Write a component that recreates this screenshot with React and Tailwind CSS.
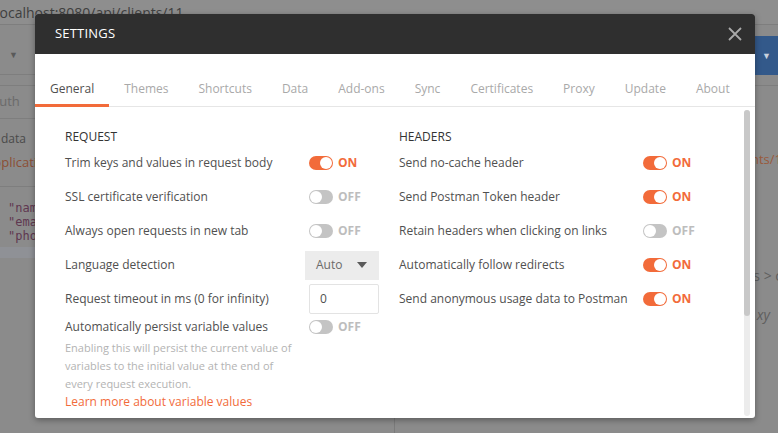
import React from "react";

const tabs = [
  "General",
  "Themes",
  "Shortcuts",
  "Data",
  "Add-ons",
  "Sync",
  "Certificates",
  "Proxy",
  "Update",
  "About",
];

const Toggle = ({ on }) => (
  <div className="flex items-center gap-[5px] pl-1">
    {on ? (
      <div className="w-[24px] h-[14px] rounded-full bg-[#f26b3a] flex items-center justify-end pr-[1px]">
        <div className="w-[12px] h-[12px] rounded-full bg-white" />
      </div>
    ) : (
      <div className="w-[24px] h-[14px] rounded-full bg-[#c4c4c4] flex items-center pl-[1px]">
        <div className="w-[12px] h-[12px] rounded-full bg-white" />
      </div>
    )}
    <span
      className={
        on
          ? "text-[12px] font-bold text-[#f26b3a]"
          : "text-[12px] font-bold text-[#bdbdbd]"
      }>
      {on ? "ON" : "OFF"}
    </span>
  </div>
);

const Row = ({ label, children }) => (
  <div className="flex items-center h-[34px]">
    <div className="w-[240px] text-[12px] text-[#505050]">{label}</div>
    <div className="w-[74px]">{children}</div>
  </div>
);

const App = () => {
  return (
    <div className="relative w-[778px] h-[433px] overflow-hidden bg-[#8b8b8b] font-['Open_Sans',sans-serif]">
      {/* dimmed app behind */}
      <div className="h-[25px] border-b border-[#7e7e7e] bg-[#8e8e8e] flex items-center">
        <span className="ml-[-4px] text-[14px] text-[#3f3f3f]">
          localhost:8080/api/clients/11
        </span>
      </div>
      <div className="flex h-[408px]">
        <div className="w-[395px] border-r border-[#7b7b7b]">
          <div className="w-[35px] overflow-hidden flex flex-col">
            <div className="h-[11px]" />
            <div className="h-[39px] border-b border-[#7e7e7e] flex items-center pl-[9px]">
              <span className="text-[9px] text-[#5a5a5a]">▼</span>
            </div>
            <div className="h-[11px] border-b border-[#7e7e7e]" />
            <div className="h-[33px] border-b border-[#7e7e7e] flex items-center">
              <span className="ml-[-9px] text-[13px] text-[#6a6a6a] whitespace-nowrap">
                Auth
              </span>
            </div>
            <div className="h-[68px] border-b border-[#7e7e7e] flex flex-col pt-[11px]">
              <span className="ml-[1px] text-[12px] text-[#4a4a4a] leading-[18px]">
                data
              </span>
              <span className="ml-[-14px] mt-[5px] text-[13px] text-[#8b4f35] leading-[18px] whitespace-nowrap">
                application/json
              </span>
            </div>
            <div className="pt-[14px] font-['DejaVu_Sans_Mono',monospace] text-[12px] leading-[14px] text-[#5f3750] pl-[8px] whitespace-nowrap">
              <div>"name"</div>
              <div>"email"</div>
              <div>"phone"</div>
            </div>
            <div className="mt-[4px] h-[11px] bg-[#8f9196]" />
          </div>
        </div>
        <div className="flex-1 flex flex-col">
          <div className="h-[11px]" />
          <div className="h-[39px] flex justify-end">
            <div className="w-[23px] bg-[#33598a] flex items-center justify-center">
              <span className="text-[9px] text-[#c9d2de]">▼</span>
            </div>
          </div>
          <div className="h-[11px] border-b border-[#7e7e7e]" />
          <div className="flex flex-col items-end text-[13px]">
            <span className="mt-[64px] mr-[-4px] text-[#9a5a3c]">nts/1</span>
            <span className="mt-[95px] mr-[-4px] text-[#5f5f5f] text-[14px]">
              is &gt; c
            </span>
            <span className="mt-[18px] mr-[8px] italic text-[#5f5f5f] text-[14px]">
              xy
            </span>
          </div>
        </div>
      </div>

      {/* settings modal */}
      <div className="absolute left-[35px] top-[14px] w-[720px] h-[404px] bg-white rounded-[3px] shadow-[0_2px_6px_rgba(0,0,0,0.35)] flex flex-col overflow-hidden">
        <div className="h-[40px] bg-[#2f2f2f] flex items-center justify-between pl-[20px] pr-[13px]">
          <span className="text-[13px] text-white font-medium tracking-[0.2px]">
            SETTINGS
          </span>
          <svg width="14" height="14" viewBox="0 0 14 14">
            <path
              d="M1 1 L13 13 M13 1 L1 13"
              stroke="#a9a9a9"
              strokeWidth="1.8"
            />
          </svg>
        </div>

        <div className="mt-[16px] h-[37px] border-b border-[#e6e6e6] flex">
          {tabs.map((t, i) => (
            <div
              key={t}
              className={
                i === 0
                  ? "px-[15px] h-[37px] flex items-center text-[12px] text-[#505050] border-b-[3px] border-[#f26b3a] pt-[3px]"
                  : "px-[15px] h-[37px] flex items-center text-[12px] text-[#a9a9a9] pt-[3px] pb-[3px]"
              }>
              {t}
            </div>
          ))}
        </div>

        <div className="flex-1 flex min-h-0">
          <div className="flex-1 flex gap-[20px] pl-[30px] pt-[21px]">
            <div className="w-[314px] flex flex-col">
              <div className="h-[18px] text-[12px] text-[#333] font-medium">
                REQUEST
              </div>
              <Row label="Trim keys and values in request body">
                <Toggle on />
              </Row>
              <Row label="SSL certificate verification">
                <Toggle />
              </Row>
              <Row label="Always open requests in new tab">
                <Toggle />
              </Row>
              <Row label="Language detection">
                <div className="h-[29px] bg-[#ececec] flex items-center justify-between pl-[11px] pr-[12px] text-[12px] text-[#6a6a6a]">
                  <span>Auto</span>
                  <svg width="10" height="6" viewBox="0 0 10 6">
                    <path d="M0 0 L10 0 L5 6 Z" fill="#5a5a5a" />
                  </svg>
                </div>
              </Row>
              <Row label="Request timeout in ms (0 for infinity)">
                <div className="ml-[4px] h-[30px] border border-[#e3e3e3] rounded-[2px] flex items-center pl-[10px] text-[12px] text-[#505050]">
                  0
                </div>
              </Row>
              <div className="mt-[2px] flex items-center h-[18px]">
                <div className="w-[240px] text-[12px] text-[#505050]">
                  Automatically persist variable values
                </div>
                <Toggle />
              </div>
              <div className="mt-[3px] w-[236px] text-[11px] leading-[18px] text-[#b3b3b3]">
                Enabling this will persist the current value of variables to the
                initial value at the end of every request execution.
              </div>
              <div className="text-[12px] leading-[18px] text-[#f26b3a]">
                Learn more about variable values
              </div>
            </div>

            <div className="w-[314px] flex flex-col">
              <div className="h-[18px] text-[12px] text-[#333] font-medium">
                HEADERS
              </div>
              <Row label="Send no-cache header">
                <Toggle on />
              </Row>
              <Row label="Send Postman Token header">
                <Toggle on />
              </Row>
              <Row label="Retain headers when clicking on links">
                <Toggle />
              </Row>
              <Row label="Automatically follow redirects">
                <Toggle on />
              </Row>
              <Row label="Send anonymous usage data to Postman">
                <Toggle on />
              </Row>
            </div>
          </div>

          <div className="w-[6px] mr-[5px] mt-[3px] mb-[2px] rounded-full bg-[#ececec] flex flex-col">
            <div className="h-[206px] rounded-full bg-[#c8c8c8]" />
          </div>
        </div>
      </div>
    </div>
  );
};

export default App;
